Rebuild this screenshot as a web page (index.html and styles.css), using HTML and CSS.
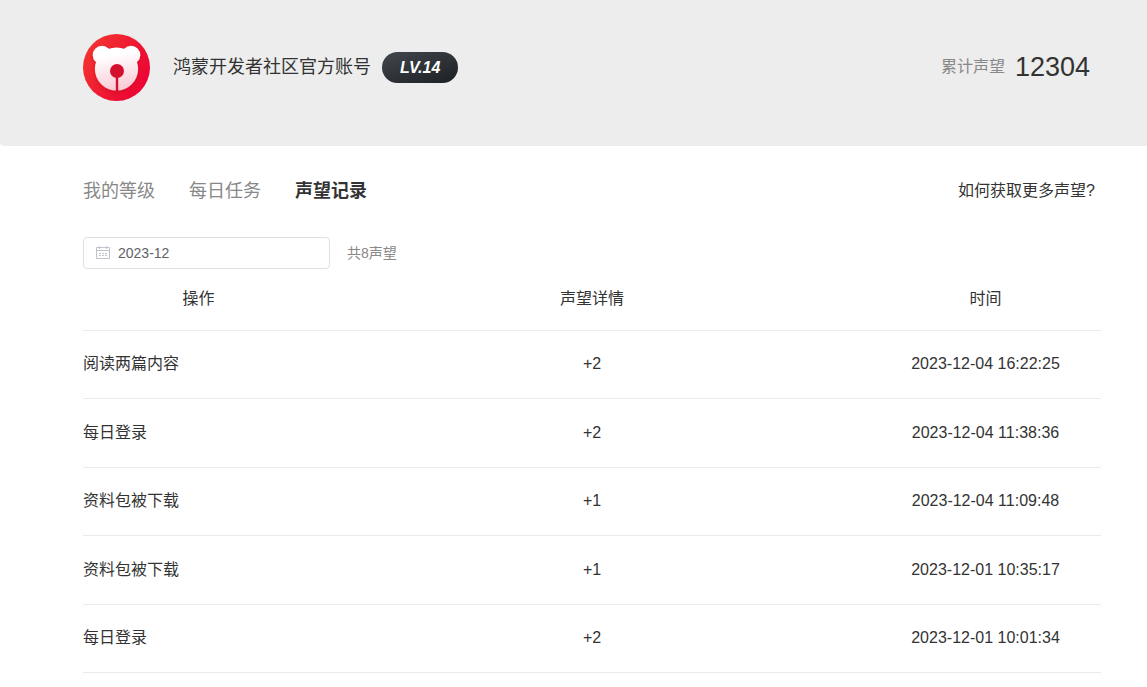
FILE: index.html
```html
<!DOCTYPE html>
<html lang="zh-CN">
<head>
<meta charset="utf-8">
<title>声望记录</title>
<link rel="stylesheet" href="styles.css">
</head>
<body>
<header class="profile">
  <svg class="avatar" viewBox="0 0 68 68" aria-hidden="true">
    <defs>
      <linearGradient id="red" x1="0" y1="0.2" x2="1" y2="0.8"><stop offset="0" stop-color="#f3352f"/><stop offset="1" stop-color="#ec0035"/></linearGradient>
      <linearGradient id="face" x1="0.4" y1="0" x2="0.6" y2="1"><stop offset="0.2" stop-color="#fff"/><stop offset="1" stop-color="#f8c8d3"/></linearGradient>
      <filter id="shade" x="-20%" y="-20%" width="140%" height="140%"><feDropShadow dx="0" dy="2" stdDeviation="2" flood-color="#a80020" flood-opacity="0.35"/></filter>
    </defs>
    <circle cx="34.500" cy="34.500" r="33.500" fill="url(#red)"/>
    <path filter="url(#shade)" fill="url(#face)" d="M10.700 22a9.300 9.300 0 1 1 18.600 0a9.300 9.300 0 1 1-18.600 0ZM39.700 22a9.300 9.300 0 1 1 18.600 0a9.300 9.300 0 1 1-18.600 0ZM12.900 36a21.600 21.600 0 1 1 43.200 0a21.600 21.600 0 1 1-43.200 0Z"/>
    <circle cx="35" cy="38" r="7" fill="#d5102f"/>
    <path d="M35 43V58" stroke="#d5102f" stroke-width="2.400"/>
  </svg>
  <h1 class="name">鸿蒙开发者社区官方账号</h1>
  <span class="level">LV.14</span>
  <p class="total"><span class="total-label">累计声望</span><span class="total-value">12304</span></p>
</header>
<main class="content">
  <nav class="tabs">
    <a class="tab" href="#level">我的等级</a>
    <a class="tab" href="#tasks">每日任务</a>
    <a class="tab tab-active" href="#records" aria-current="page">声望记录</a>
    <a class="help" href="#help">如何获取更多声望?</a>
  </nav>
  <div class="filter">
    <label class="month">
      <svg class="calendar" viewBox="0 0 14 14" fill="none" stroke="#c0c4cc" aria-hidden="true">
        <path d="M.5 1.500H13.500V12.500H.5ZM.5 4.500H13.500M3.500 0V3M10.500 0V3"/>
        <path d="M3 7.500H5M6 7.500H8M9 7.500H11M3 9.500H5M6 9.500H8M9 9.500H11"/>
      </svg>
      <input class="month-input" type="text" value="2023-12" aria-label="月份">
    </label>
    <span class="sum">共8声望</span>
  </div>
  <table class="records">
    <colgroup><col class="col-side"><col><col class="col-side"></colgroup>
    <thead><tr><th>操作</th><th>声望详情</th><th>时间</th></tr></thead>
    <tbody>
      <tr><td>阅读两篇内容</td><td>+2</td><td>2023-12-04 16:22:25</td></tr>
      <tr><td>每日登录</td><td>+2</td><td>2023-12-04 11:38:36</td></tr>
      <tr><td>资料包被下载</td><td>+1</td><td>2023-12-04 11:09:48</td></tr>
      <tr><td>资料包被下载</td><td>+1</td><td>2023-12-01 10:35:17</td></tr>
      <tr><td>每日登录</td><td>+2</td><td>2023-12-01 10:01:34</td></tr>
    </tbody>
  </table>
</main>
</body>
</html>
```
FILE: styles.css
```css
* {
  box-sizing: border-box;
}

body {
  margin: 0;
  background: #fff;
  color: #333;
  font-family: "Liberation Sans", "Noto Sans CJK SC", sans-serif;
  font-size: 16px;
  line-height: 24px;
}

.profile {
  display: flex;
  align-items: center;
  padding: 33px 57px 45px 82px;
  background: #ededed;
  border-bottom-left-radius: 4px;
}

.avatar {
  width: 68px;
  height: 68px;
}

.name {
  margin: 0 11px 0 23px;
  font-size: 18px;
  font-weight: 400;
}

.level {
  padding: 0 18px;
  border-radius: 16px;
  background: linear-gradient(160deg, #42474d, #1c2025);
  color: #fff;
  font-size: 16px;
  font-style: italic;
  font-weight: 700;
  line-height: 31px;
}

.total {
  display: flex;
  align-items: center;
  gap: 10px;
  margin: 0 0 0 auto;
}

.total-label {
  color: #888;
}

.total-value {
  font-size: 27px;
}

.content {
  padding: 33px 46px 0 83px;
}

.tabs {
  display: flex;
  align-items: center;
  gap: 34px;
}

.tab {
  color: #888;
  font-size: 18px;
  text-decoration: none;
}

.tab-active {
  color: #333;
  font-weight: 700;
}

.help {
  margin-left: auto;
  padding-right: 6px;
  color: #333;
  text-decoration: none;
}

.filter {
  display: flex;
  align-items: center;
  gap: 17px;
  margin-top: 34px;
}

.month {
  display: flex;
  align-items: center;
  gap: 8px;
  width: 247px;
  height: 32px;
  padding: 0 12px;
  border: 1px solid #dcdfe6;
  border-radius: 4px;
}

.calendar {
  flex: none;
  width: 14px;
  height: 14px;
}

.month-input {
  flex: 1;
  min-width: 0;
  padding: 0;
  border: 0;
  outline: 0;
  background: none;
  color: #606266;
  font: inherit;
  font-size: 14px;
}

.sum {
  color: #888;
  font-size: 14px;
}

.records {
  width: 100%;
  border-collapse: collapse;
  table-layout: fixed;
}

.col-side {
  width: 231px;
}

.records th,
.records td {
  padding: 0;
  border-bottom: 1px solid #ebebeb;
  font-weight: 400;
  text-align: center;
}

.records th {
  height: 61px;
}

.records td {
  height: 68px;
}

.records tr:nth-child(even) td {
  height: 69px;
}

.records td:first-child {
  text-align: left;
}
```
